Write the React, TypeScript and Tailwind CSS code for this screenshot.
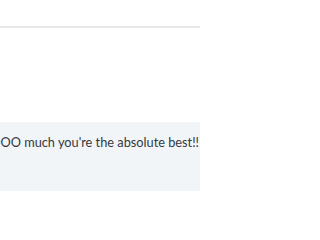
import React from 'react';

export default function App() {
  return (
    <div className="w-[200px] h-[200px] bg-white overflow-hidden flex flex-col" style={{ fontFamily: 'Lato, "Noto Sans", sans-serif' }}>
      <div className="h-[28px] shrink-0 border-b-2 border-[#e8e8ea]" />
      <div className="h-[94px] shrink-0" />
      <div className="h-[69px] shrink-0 bg-[#f2f5f8] flex justify-end pr-[1px] pt-[10px]">
        <p className="whitespace-nowrap text-[12.75px] leading-[20px] text-[#34383d]">
          Thank you SOOO much you're the absolute best!!
        </p>
      </div>
    </div>
  );
}
